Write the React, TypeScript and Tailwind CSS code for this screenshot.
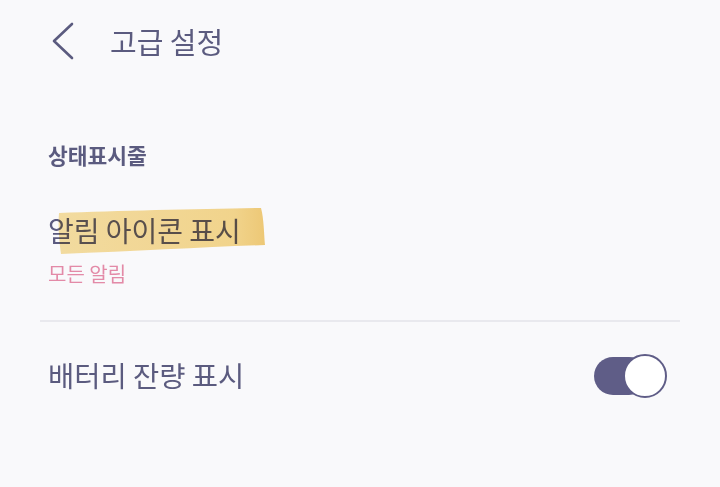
import React from 'react';

const font = { fontFamily: '"Noto Sans CJK KR", "Noto Sans", sans-serif' };

const Toggle = ({ on }: { on: boolean }) => (
  <div className="relative w-[72px] h-[44px]">
    <div className={"absolute left-0 top-[3px] w-[54px] h-[38px] rounded-full " + (on ? "bg-[#5f5d87]" : "bg-[#d5d5dd]")} />
    <div className="absolute left-[29px] top-0 w-[44px] h-[44px] rounded-full bg-white border-[2.5px] border-[#5f5d87]" />
  </div>
);

const App = () => {
  return (
    <div className="w-[720px] h-[487px] bg-[#f9f9fb] text-[#5b5b7f] overflow-hidden" style={font}>
      {/* Header */}
      <div className="flex items-center pl-[51px] pt-[12px] h-[70px]">
        <svg width="24" height="38" viewBox="0 0 24 38" fill="none">
          <path d="M21 2 L3 19 L21 36" stroke="#5b5b7f" strokeWidth="2.6" strokeLinecap="round" strokeLinejoin="round" />
        </svg>
        <h1 className="ml-[35px] text-[29px] leading-none font-normal">고급 설정</h1>
      </div>

      {/* Section */}
      <div className="pl-[48px] mt-[74px] text-[21.5px] font-bold leading-none">상태표시줄</div>

      <div className="pl-[48px] mt-[50px]">
        <div className="relative w-fit">
          <div className="text-[28px] leading-none">알림 아이콘 표시</div>
          <svg className="absolute left-[10px] top-[-9px] mix-blend-multiply pointer-events-none" width="208" height="48" viewBox="0 0 208 48">
            <defs>
              <linearGradient id="hl" x1="0" x2="1" y1="0" y2="0">
                <stop offset="0" stopColor="#f7dc92" />
                <stop offset="0.85" stopColor="#f6d27a" />
                <stop offset="1" stopColor="#f1c460" />
              </linearGradient>
            </defs>
            <path d="M1 6 C60 4 140 2 203 1 C206 12 206 28 207 38 C150 40 80 44 3 47 C1 34 0 18 1 6 Z" fill="url(#hl)" opacity="0.85" />
          </svg>
        </div>
        <div className="mt-[20px] text-[20px] leading-none text-[#e38aa7]">모든 알림</div>
      </div>

      <div className="mx-[40px] mt-[36px] h-[2px] bg-[#e9e9ee]" />

      {/* Battery row */}
      <div className="flex items-center justify-between pl-[48px] pr-[54px] mt-[32px]">
        <span className="text-[28.5px] leading-none">배터리 잔량 표시</span>
        <Toggle on={true} />
      </div>
    </div>
  );
};

export default App;
